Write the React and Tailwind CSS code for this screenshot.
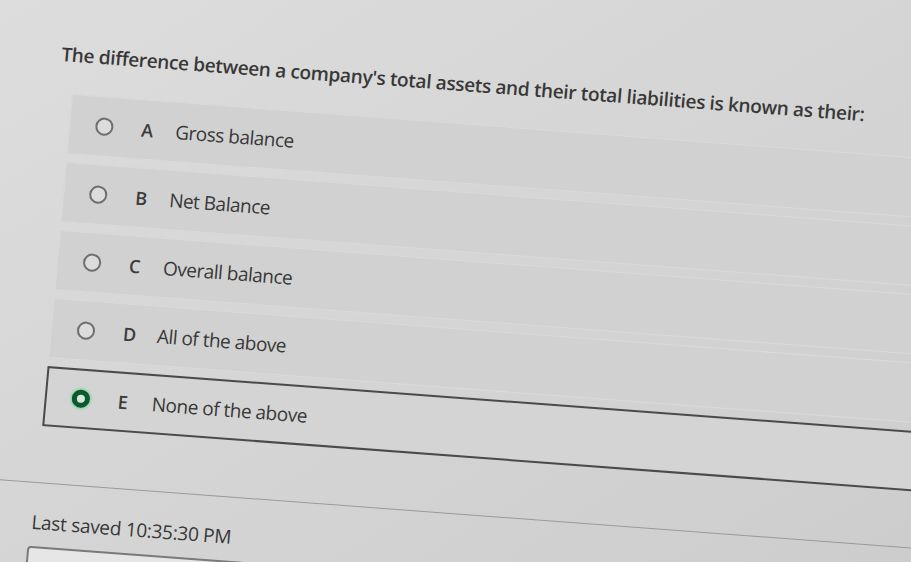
const options = [
  { key: 'A', label: 'Gross balance' },
  { key: 'B', label: 'Net Balance' },
  { key: 'C', label: 'Overall balance' },
  { key: 'D', label: 'All of the above' },
  { key: 'E', label: 'None of the above', selected: true },
];

function Radio({ checked }) {
  if (checked) {
    return (
      <span className="w-[18px] h-[18px] rounded-full border-[5px] border-[#0b5a2c] bg-[#d8e4dc] shadow-[0_0_3px_1px_#7fcf9a] shrink-0" />
    );
  }
  return <span className="w-[18px] h-[18px] rounded-full border-2 border-[#6f6f6f] bg-[#dcdcdc] shrink-0" />;
}

export default function App() {
  return (
    <div
      className="w-full h-[562px] overflow-hidden bg-gradient-to-br from-[#dddddd] via-[#d5d5d5] to-[#cdcdcd] text-[#383838]"
      style={{ fontFamily: '"Open Sans", "Noto Sans", sans-serif' }}
    >
      <div className="w-[1040px] origin-top-left [transform:matrix(1,0.075,-0.09,1,0,0)] pt-[37px]">
        <p className="ml-[66px] text-[19px] leading-6 font-semibold tracking-[-0.35px]">
          The difference between a company's total assets and their total liabilities is known as their:
        </p>

        <div className="ml-[80px] mt-[27px] flex flex-col gap-2">
          {options.map((o) => (
            <div
              key={o.key}
              className={`h-[60px] flex items-center pl-[25px] ${
                o.selected
                  ? 'border-2 border-[#4a4a4a] bg-[#d4d4d4] pl-[23px]'
                  : 'bg-[#d1d1d1] border border-[#dadada]'
              }`}
            >
              <Radio checked={o.selected} />
              <span className="ml-[28px] w-[34px] text-[18px] font-semibold text-[#3c3c3c]">{o.key}</span>
              <span className="text-[19px] font-medium tracking-[-0.5px]">{o.label}</span>
            </div>
          ))}
        </div>

        <div className="mt-[56px] border-t border-[#9a9a9a] shadow-[0_1px_0_#ececec] pt-[25px] pl-[78px]">
          <p className="text-[19px] font-medium tracking-[-0.3px]">Last saved 10:35:30 PM</p>
          <div className="mt-[9px] ml-[-2px] w-[260px] h-[40px] border-2 border-[#7a7a7a] bg-[#e6e6e6] rounded-sm" />
        </div>
      </div>
    </div>
  );
}
